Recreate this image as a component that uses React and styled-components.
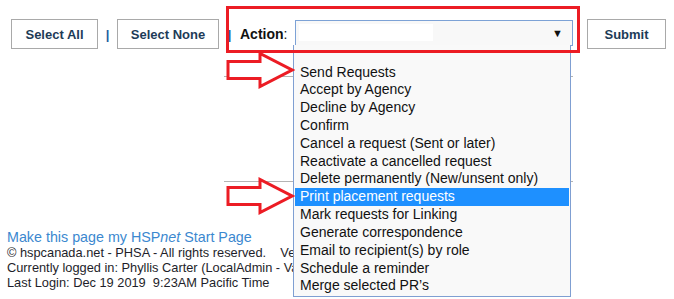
import React from 'react'
import styled, { createGlobalStyle } from 'styled-components'

const Global = createGlobalStyle`
  body {
    margin: 0;
    background: #fff;
    font-family: Arial, "Liberation Sans", sans-serif;
  }
`

const Page = styled.div`
  position: relative;
  width: 674px;
  height: 299px;
  overflow: hidden;
`

const Toolbar = styled.div`
  display: flex;
  align-items: center;
  padding: 19px 0 0 11px;
  height: 30px;
`

const Button = styled.div`
  box-sizing: border-box;
  height: 30px;
  width: ${props => props.w}px;
  border: 1px solid #a9a9a9;
  background: #fff;
  color: #1d3b57;
  font-size: 13px;
  font-weight: bold;
  display: flex;
  align-items: center;
  justify-content: center;
  margin-left: ${props => props.ml || 0}px;
`

const Sep = styled.span`
  color: #1f5e9e;
  font-weight: bold;
  font-size: 13px;
  width: ${props => props.w}px;
  text-align: center;
`

const Label = styled.span`
  font-size: 14px;
  color: #111;
  width: 55px;
  b {
    font-weight: bold;
  }
`

const SelectBox = styled.div`
  position: relative;
  box-sizing: border-box;
  width: 278px;
  height: 26px;
  margin-top: -3px;
  border: 1px solid #7da2d6;
  background: #f8f8f8;
  display: flex;
  align-items: center;
  padding: 0 0 0 3px;
`

const Redacted = styled.span`
  display: block;
  width: 134px;
  height: 17px;
  background: #fff;
`

const Caret = styled.span`
  margin-left: auto;
  margin-right: 9px;
  font-size: 11px;
  color: #111;
`

const Table = styled.div`
  margin: 3px 0 0 224px;
  width: 349px;
`

const TableRow = styled.div`
  height: ${props => props.h}px;
  border-bottom: 1px solid #b4b4b4;
`

const Footer = styled.div`
  margin: 48px 0 0 7px;
  font-size: 12.8px;
  line-height: 15px;
  color: #1e1e2a;
  white-space: nowrap;
`

const Link = styled.div`
  color: #3b88cf;
  font-size: 14.3px;
`

const Dropdown = styled.div`
  position: absolute;
  left: 293px;
  top: 45px;
  box-sizing: border-box;
  width: 278px;
  height: 252px;
  border: 1px solid #7f9fd2;
  border-top: none;
  background: #f9f9f9;
  padding: 18.5px 1px 0 1px;
`

const Option = styled.div`
  height: 17.83px;
  line-height: 17.83px;
  padding-left: 5px;
  font-size: 14px;
  color: ${props => (props.active ? '#fff' : '#111')};
  background: ${props => (props.active ? '#1e90ff' : 'transparent')};
`

const Callout = styled.div`
  position: absolute;
  left: 226px;
  top: 6px;
  box-sizing: border-box;
  width: 354px;
  height: 47px;
  border: 3px solid #ec1c24;
`

const ArrowMark = styled.svg`
  position: absolute;
  left: 225px;
  top: ${props => props.top}px;
`

const Arrow = ({ top }) => (
  <ArrowMark top={top} width="70" height="38" viewBox="0 0 70 38">
    <path
      d="M3 10.5 L35 10.5 L35 2.5 L67 19 L35 35.5 L35 27.5 L3 27.5 Z"
      fill="#fff"
      stroke="#ec1c24"
      strokeWidth="3"
    />
  </ArrowMark>
)

const options = [
  'Send Requests',
  'Accept by Agency',
  'Decline by Agency',
  'Confirm',
  'Cancel a request (Sent or later)',
  'Reactivate a cancelled request',
  'Delete permanently (New/unsent only)',
  'Print placement requests',
  'Mark requests for Linking',
  'Generate correspondence',
  'Email to recipient(s) by role',
  'Schedule a reminder',
  'Merge selected PR\u2019s',
]

export default function App() {
  return (
    <Page>
      <Global />
      <Toolbar>
        <Button w={87}>Select All</Button>
        <Sep w={19}>|</Sep>
        <Button w={102}>Select None</Button>
        <Sep w={21}>|</Sep>
        <Label>
          <b>Action</b>:
        </Label>
        <SelectBox>
          <Redacted />
          <Caret>▼</Caret>
        </SelectBox>
        <Button w={79} ml={14}>Submit</Button>
      </Toolbar>
      <Table>
        <TableRow h={24} />
        <TableRow h={104} />
      </Table>
      <Footer>
        <Link>
          Make this page my HSP<i>net</i> Start Page
        </Link>
        <div>© hspcanada.net - PHSA - All rights reserved.&nbsp;&nbsp;&nbsp;&nbsp;Version 4.6.2</div>
        <div>Currently logged in: Phyllis Carter (LocalAdmin - Vancouver)</div>
        <div>Last Login: Dec 19 2019&nbsp;&nbsp;9:23AM Pacific Time</div>
      </Footer>
      <Dropdown>
        {options.map((o, i) => (
          <Option key={o} active={i === 7}>
            {o}
          </Option>
        ))}
      </Dropdown>
      <Callout />
      <Arrow top={51} />
      <Arrow top={177} />
    </Page>
  )
}
